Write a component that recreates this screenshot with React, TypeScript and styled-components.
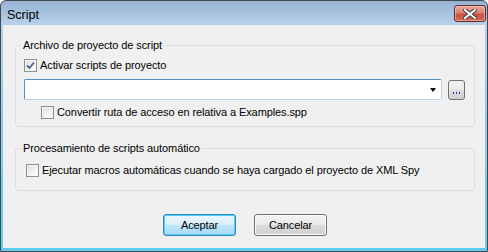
import styled, { createGlobalStyle } from "styled-components";

const GlobalStyle = createGlobalStyle`
  html, body {
    margin: 0;
    padding: 0;
    background: #ffffff;
  }
  body {
    font-family: "Liberation Sans", Arial, sans-serif;
    font-size: 11px;
    letter-spacing: -0.1px;
    color: #000;
  }
`;

const CheckBox = ({ checked }: { checked?: boolean }) => (
  <Box>
    {checked && (
      <svg width="9" height="9" viewBox="0 0 9 9">
        <path
          d="M1 4.5 L3.5 7 L8 1.5"
          fill="none"
          stroke="#4a5f8e"
          strokeWidth="1.8"
        />
      </svg>
    )}
  </Box>
);

const App = () => {
  return (
    <>
      <GlobalStyle />
      <Window>
        <TitleBar>
          <Title>Script</Title>
          <CloseButton>
            <svg width="14" height="10" viewBox="0 0 14 10">
              <path
                d="M2 1 L12 9 M12 1 L2 9"
                stroke="#3c3c3c"
                strokeWidth="4"
                strokeLinecap="square"
              />
              <path
                d="M2 1 L12 9 M12 1 L2 9"
                stroke="#ffffff"
                strokeWidth="2"
                strokeLinecap="square"
              />
            </svg>
          </CloseButton>
        </TitleBar>
        <Client>
          <Group>
            <Legend>Archivo de proyecto de script</Legend>
            <GroupBody $top={7} $bottom={7}>
              <CheckRow>
                <CheckBox checked />
                <span>Activar scripts de proyecto</span>
              </CheckRow>
              <PathRow>
                <Combo>
                  <Arrow />
                </Combo>
                <BrowseButton>
                  <Dot />
                  <Dot />
                  <Dot />
                </BrowseButton>
              </PathRow>
              <CheckRow $indent={17}>
                <CheckBox />
                <span>Convertir ruta de acceso en relativa a Examples.spp</span>
              </CheckRow>
            </GroupBody>
          </Group>
          <Group $second>
            <Legend>Procesamiento de scripts automático</Legend>
            <GroupBody $top={9} $bottom={13}>
              <CheckRow $indent={2}>
                <CheckBox />
                <span>
                  Ejecutar macros automáticas cuando se haya cargado el proyecto
                  de XML Spy
                </span>
              </CheckRow>
            </GroupBody>
          </Group>
          <Buttons>
            <DialogButton $default>Aceptar</DialogButton>
            <DialogButton>Cancelar</DialogButton>
          </Buttons>
        </Client>
      </Window>
    </>
  );
};

const Window = styled.div`
  box-sizing: border-box;
  width: 488px;
  height: 252px;
  display: flex;
  flex-direction: column;
  border: 1px solid #3d4a57;
  border-radius: 6px 6px 0 0;
  background: linear-gradient(
    to bottom,
    #97b3d2 0px,
    #b9d1ea 24px,
    #8fcbe9 120px,
    #5fcdf0 100%
  );
  overflow: hidden;
`;

const TitleBar = styled.div`
  height: 24px;
  display: flex;
  align-items: center;
  justify-content: space-between;
  padding: 0 1px 0 6px;
  flex-shrink: 0;
`;

const Title = styled.span`
  font-family: "Liberation Sans", Arial, sans-serif;
  font-size: 12.5px;
  letter-spacing: 0;
  color: #000;
  margin-top: 3px;
`;

const CloseButton = styled.div`
  box-sizing: border-box;
  width: 32px;
  height: 17px;
  margin-top: 1px;
  display: flex;
  align-items: center;
  justify-content: center;
  border: 1px solid #5e2a2a;
  border-radius: 3px;
  background: linear-gradient(
    to bottom,
    #e6a89e 0%,
    #d98474 45%,
    #c8513f 55%,
    #d26a55 100%
  );
  box-shadow: inset 0 0 0 1px rgba(255, 220, 210, 0.5);
`;

const Client = styled.div`
  flex: 1;
  margin: 0 2px 3px;
  background: #f0f0f0;
  display: flex;
  flex-direction: column;
  padding: 14px 10px 0 12px;
`;

const Group = styled.fieldset<{ $second?: boolean }>`
  margin: ${({ $second }) => ($second ? "15px 0 0" : "0")};
  padding: 0;
  border: 1px solid #d5dfe5;
  border-radius: 3px;
  min-width: 0;
`;

const Legend = styled.legend`
  padding: 0 1px;
  margin-left: 6px;
  line-height: 13px;
  font-size: 11px;
`;

const GroupBody = styled.div<{ $top: number; $bottom: number }>`
  display: flex;
  flex-direction: column;
  padding: ${({ $top, $bottom }) => `${$top}px 0 ${$bottom}px 8px`};
`;

const CheckRow = styled.label<{ $indent?: number }>`
  display: flex;
  align-items: center;
  gap: 3px;
  height: 13px;
  margin-left: ${({ $indent }) => $indent ?? 0}px;
  line-height: 13px;
  white-space: nowrap;
`;

const Box = styled.span`
  box-sizing: border-box;
  width: 13px;
  height: 13px;
  display: flex;
  align-items: center;
  justify-content: center;
  border: 1px solid #8e8f8f;
  background: linear-gradient(135deg, #dcdcdc 0%, #f4f4f4 60%, #ffffff 100%);
  box-shadow: inset 0 0 0 1px #f4f4f4;
  flex-shrink: 0;
`;

const PathRow = styled.div`
  display: flex;
  align-items: center;
  gap: 6px;
  margin: 7px 0 6px;
`;

const Combo = styled.div`
  box-sizing: border-box;
  width: 418px;
  height: 21px;
  background: #fff;
  border: 1px solid;
  border-color: #5b8fbd #b6d3ec #b6d3ec #5b8fbd;
  border-radius: 2px;
  display: flex;
  align-items: center;
  justify-content: flex-end;
  padding-right: 5px;
`;

const Arrow = styled.span`
  width: 0;
  height: 0;
  border-left: 3.5px solid transparent;
  border-right: 3.5px solid transparent;
  border-top: 4px solid #000;
`;

const BrowseButton = styled.div`
  box-sizing: border-box;
  width: 17px;
  height: 20px;
  border: 1px solid #707070;
  border-radius: 3px;
  background: linear-gradient(
    to bottom,
    #f2f2f2 0%,
    #ebebeb 50%,
    #dddddd 51%,
    #cfcfcf 100%
  );
  display: flex;
  align-items: flex-end;
  justify-content: center;
  gap: 2px;
  padding-bottom: 5px;
`;

const Dot = styled.span`
  width: 1px;
  height: 2px;
  background: #3a2fa0;
`;

const Buttons = styled.div`
  display: flex;
  justify-content: center;
  gap: 18px;
  margin-top: 23px;
`;

const DialogButton = styled.div<{ $default?: boolean }>`
  box-sizing: border-box;
  width: 73px;
  height: 22px;
  display: flex;
  align-items: center;
  justify-content: center;
  border: 1px solid ${({ $default }) => ($default ? "#3c7fb1" : "#707070")};
  border-radius: 3px;
  background: ${({ $default }) =>
    $default
      ? "linear-gradient(to bottom, #eaf6fd 0%, #d9f0fc 50%, #bee6fd 51%, #a7d9f5 100%)"
      : "linear-gradient(to bottom, #f2f2f2 0%, #ebebeb 50%, #dddddd 51%, #cfcfcf 100%)"};
  box-shadow: ${({ $default }) =>
    $default ? "inset 0 0 0 1px #48d4fb" : "inset 0 0 0 1px #fbfbfb"};
  font-size: 11px;
`;

export default App;
